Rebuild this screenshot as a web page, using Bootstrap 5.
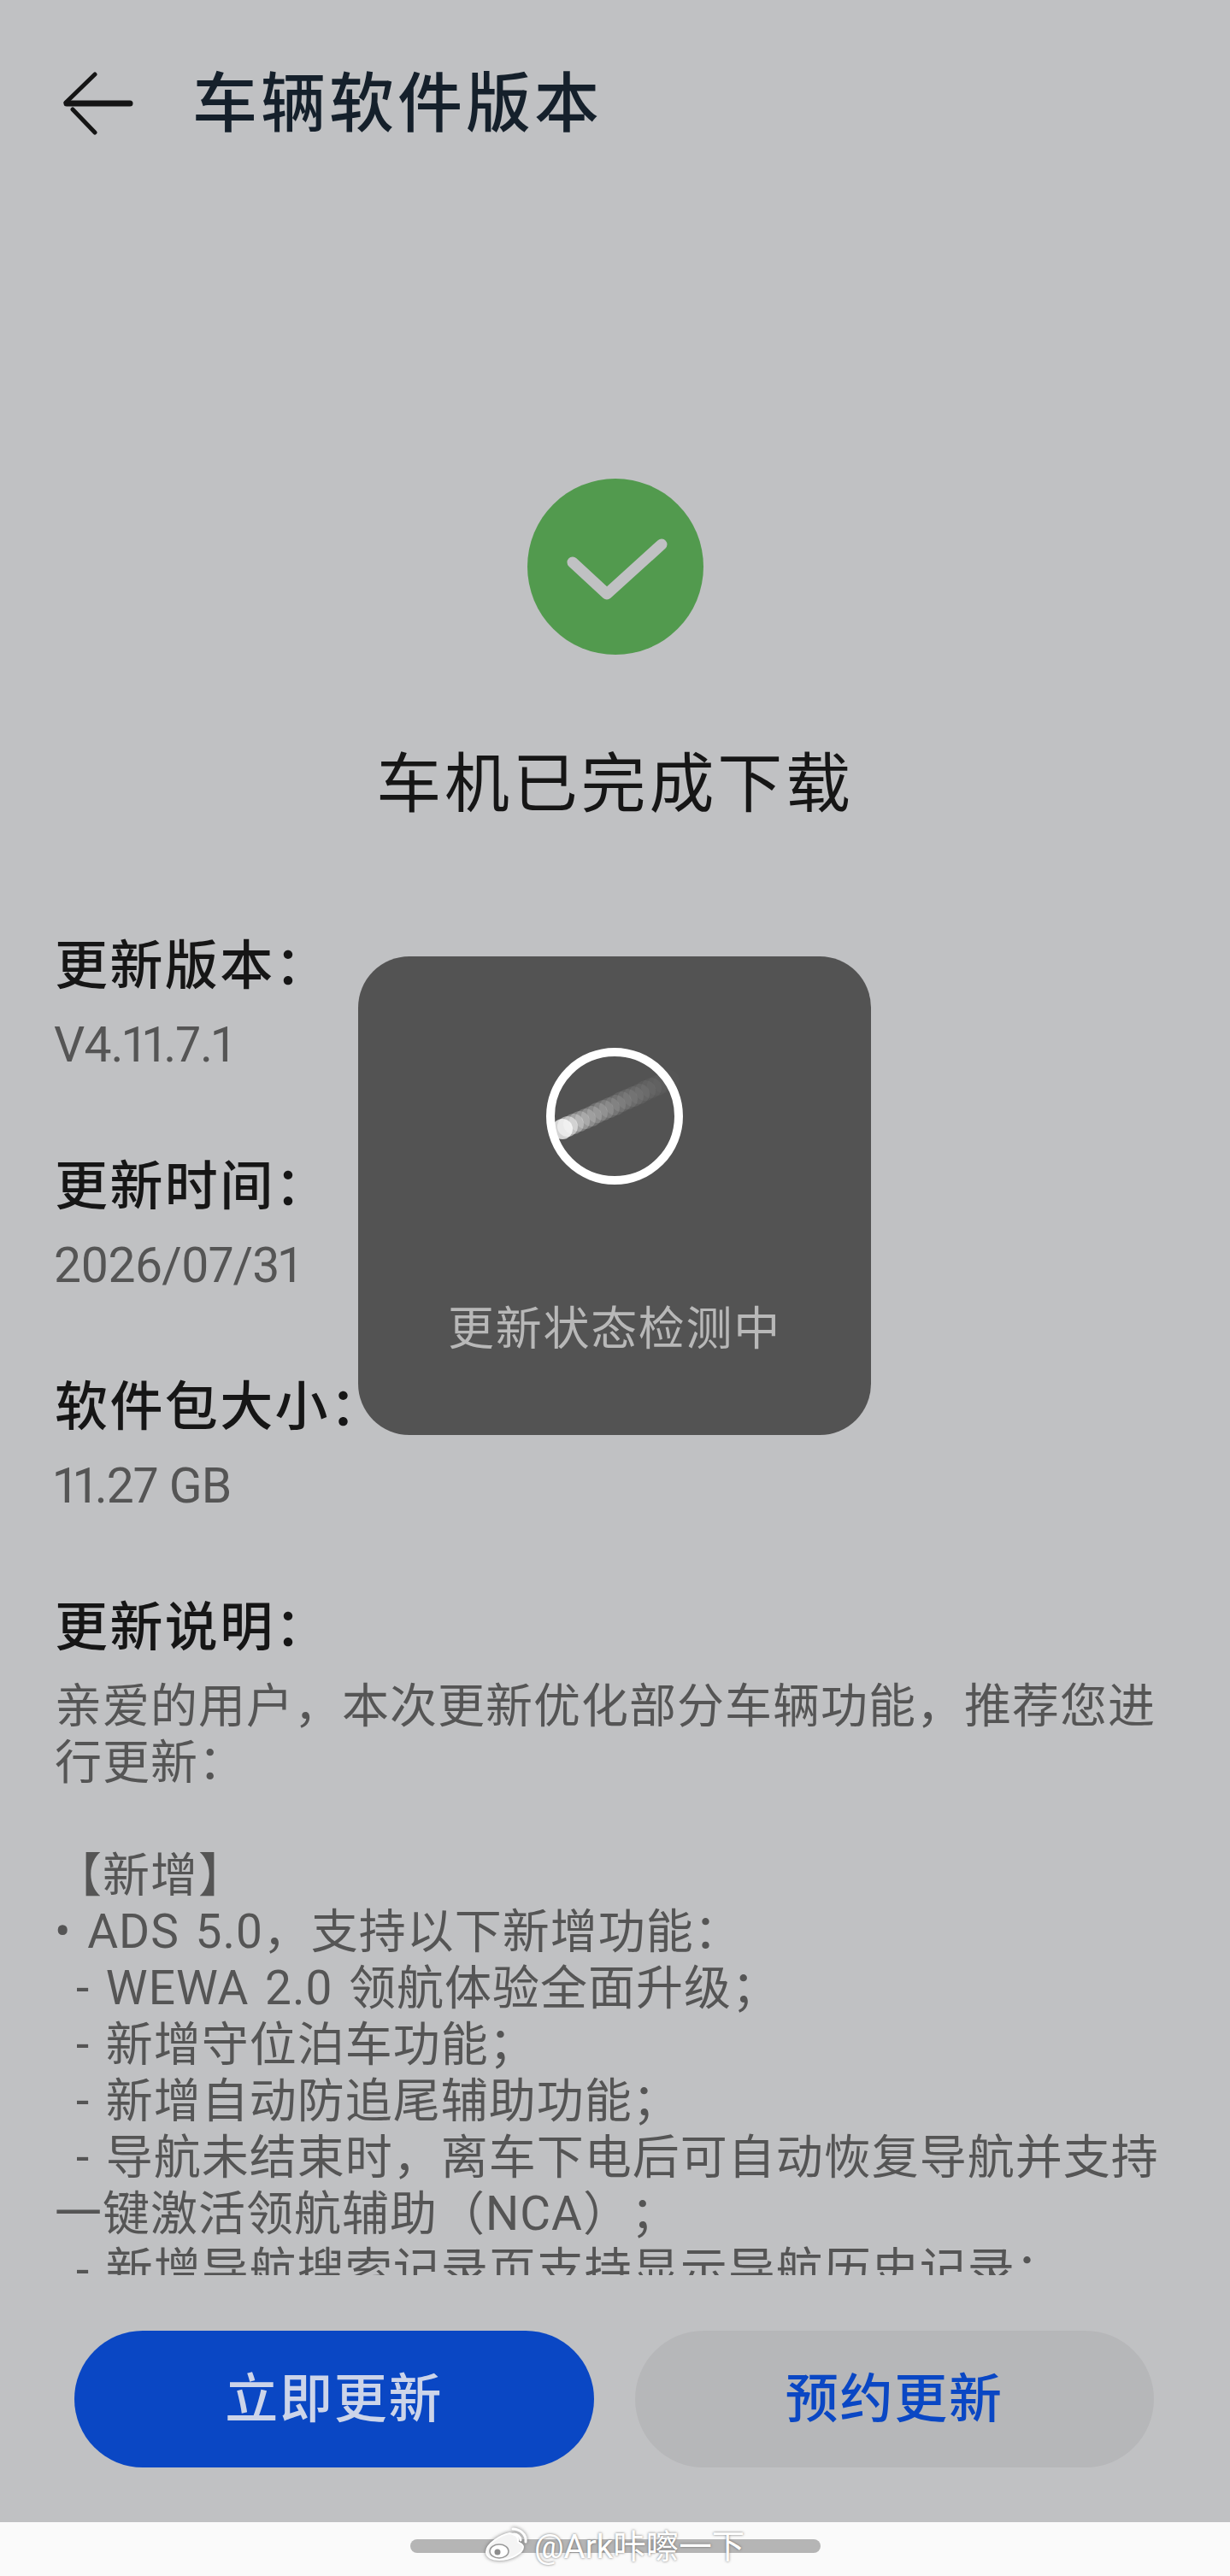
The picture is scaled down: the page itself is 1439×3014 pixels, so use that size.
<!DOCTYPE html>
<html lang="zh-CN">
<head>
  <meta charset="UTF-8" />
  <meta name="viewport" content="width=device-width, initial-scale=1.0"/>
  <title>车辆软件版本</title>
  <link href="https://cdn.jsdelivr.net/npm/bootstrap@5.3.0/dist/css/bootstrap.min.css" rel="stylesheet"/>
  <style>
    html, body { margin: 0; background: #fafafa; }
    body { font-family: Roboto, "Noto Sans CJK SC", sans-serif; text-spacing-trim: space-all; }
    .screen { width: 1439px; height: 3014px; overflow: hidden; position: relative; }
    .app-area { height: 2951px; background: #c0c1c3; }
    .top-bar { height: 238px; padding: 6px 0 0 72px; gap: 68px; }
    .top-bar h1 { margin: 0; font-size: 76px; font-weight: 500; letter-spacing: 4px; color: #15202b; line-height: 1; }
    .scroll-area { height: 2424px; overflow: hidden; padding: 0 64px; }
    .done-icon { margin-top: 322px; }
    .done-title { margin: 102px 0 0; font-size: 76px; font-weight: 400; letter-spacing: 3.8px; color: #161616; line-height: 100px; }
    .info-block { margin-top: 123px; }
    .info-label { margin: 0; font-size: 62px; font-weight: 500; letter-spacing: 2.4px; color: #161616; line-height: 80px; }
    .info-value { margin: 10px 0 84px -1px; font-size: 57px; letter-spacing: -.9px; color: #555; line-height: 84px; font-variant-numeric: proportional-nums; }
    .info-text { margin: 18px 0 0; font-size: 55px; letter-spacing: 1px; word-spacing: 4px; color: #555; line-height: 66px; }
    .info-text > div { min-height: 66px; }
    .info-text .sub-item { text-indent: 25px; }
    .action-row { height: 289px; padding: 65px 89px 0 87px; gap: 48px; }
    .action-row .btn { width: 608px; height: 160px; padding: 2px 0 0; border: 0; font-size: 62px; font-weight: 500; letter-spacing: 1.7px; line-height: 1; }
    .btn-now, .btn-now:hover { background: #0a47c4; color: #ccd4e9; }
    .btn-later, .btn-later:hover { background: #b6b7b9; color: #0a47c4; }
    .nav-strip { height: 63px; background: #fafafa; padding-top: 20px; }
    .home-bar { width: 480px; height: 16px; background: #b5b5b5; border-radius: 8px; }
    .check-dialog { position: absolute; left: 419px; top: 1119px; width: 600px; height: 560px; background: #535353; border-radius: 60px; }
    .check-dialog p { margin: 0; padding-top: 129px; font-size: 54px; letter-spacing: 1.7px; color: #b8b8b8; line-height: 72px; }
    .spin-ring { margin-top: 102px; }
    .watermark { position: absolute; left: 560px; top: 2950px; gap: 5px; color: #fff; font-size: 38.5px; line-height: 44px; text-shadow: 0 0 3px rgba(90,90,90,.9); }
    .watermark span { margin-top: 8px; }
    .watermark svg { filter: drop-shadow(0 0 2px rgba(90,90,90,.8)); }
  </style>
</head>
<body>
  <div class="screen">
    <div class="app-area">
      <header class="top-bar d-flex align-items-center">
        <svg width="85" height="76" viewBox="0 0 85 76" fill="none" stroke="#151515" stroke-linecap="round">
          <path d="M6 37H80" stroke-width="7"/>
          <path d="M39 3 5 36M13 44 39 71" stroke-width="5"/>
        </svg>
        <h1>车辆软件版本</h1>
      </header>

      <main class="scroll-area">
        <div class="text-center">
          <svg class="done-icon" width="206" height="206" viewBox="0 0 206 206">
            <circle cx="103" cy="103" r="103" fill="#529a4e"/>
            <path d="M53 98 93 135 157 77" fill="none" stroke="#c0c1c3" stroke-width="13" stroke-linecap="round" stroke-linejoin="round"/>
          </svg>
          <h2 class="done-title">车机已完成下载</h2>
        </div>

        <div class="info-block">
          <p class="info-label">更新版本：</p>
          <p class="info-value">V4.11.7.1</p>
          <p class="info-label">更新时间：</p>
          <p class="info-value">2026/07/31</p>
          <p class="info-label">软件包大小：</p>
          <p class="info-value">11.27 GB</p>
          <p class="info-label">更新说明：</p>
          <div class="info-text">
            <div>亲爱的用户，本次更新优化部分车辆功能，推荐您进行更新：</div>
            <div></div>
            <div>【新增】</div>
            <div>• ADS 5.0，支持以下新增功能：</div>
            <div class="sub-item">- WEWA 2.0 领航体验全面升级；</div>
            <div class="sub-item">- 新增守位泊车功能；</div>
            <div class="sub-item">- 新增自动防追尾辅助功能；</div>
            <div class="sub-item">- 导航未结束时，离车下电后可自动恢复导航并支持一键激活领航辅助（NCA）；</div>
            <div class="sub-item">- 新增导航搜索记录页支持显示导航历史记录；</div>
          </div>
        </div>
      </main>

      <div class="action-row d-flex">
        <button class="btn btn-now rounded-pill">立即更新</button>
        <button class="btn btn-later rounded-pill">预约更新</button>
      </div>
    </div>

    <div class="nav-strip d-flex justify-content-center">
      <div class="home-bar"></div>
    </div>

    <div class="check-dialog text-center">
      <svg class="spin-ring d-block mx-auto" width="200" height="170" viewBox="0 0 200 170">
        <g fill="#fff">
          <circle cx="39" cy="100" r="12" opacity=".75"/>
          <circle cx="45" cy="97" r="12" opacity=".5"/>
          <circle cx="52" cy="94" r="12" opacity=".3"/>
          <circle cx="59" cy="91" r="12" opacity=".25"/>
          <circle cx="66" cy="88" r="12" opacity=".2"/>
          <circle cx="73" cy="85" r="12" opacity=".18"/>
          <circle cx="80" cy="81" r="12" opacity=".16"/>
          <circle cx="87" cy="78" r="12" opacity=".14"/>
          <circle cx="94" cy="75" r="12" opacity=".12"/>
          <circle cx="101" cy="72" r="12" opacity=".1"/>
          <circle cx="108" cy="68" r="12" opacity=".09"/>
          <circle cx="115" cy="65" r="12" opacity=".08"/>
          <circle cx="122" cy="62" r="12" opacity=".07"/>
          <circle cx="129" cy="59" r="12" opacity=".06"/>
          <circle cx="136" cy="55" r="12" opacity=".05"/>
          <circle cx="143" cy="52" r="12" opacity=".04"/>
          <circle cx="150" cy="49" r="12" opacity=".03"/>
          <circle cx="157" cy="46" r="12" opacity=".02"/>
          <circle cx="164" cy="43" r="12" opacity=".015"/>
        </g>
        <circle cx="100" cy="85" r="75" fill="none" stroke="#fff" stroke-width="10"/>
      </svg>
      <p>更新状态检测中</p>
    </div>

    <div class="watermark d-flex align-items-start">
      <svg width="60" height="50" viewBox="0 0 60 50" fill="none" stroke-linecap="round">
        <path d="M36 14C26 16 9 26 9 36c0 6 7 9 15 9 14 0 28-8 28-15 0-4-6-5-6-6 1-5-2-9-10-10Z" fill="#f4f4f4" stroke="#fff" stroke-width="2"/>
        <ellipse cx="24" cy="35" rx="11" ry="8" fill="#fff" stroke="#9a9a9a" stroke-width="1.5"/>
        <circle cx="22" cy="36" r="3.5" fill="#8d8d8d"/>
        <path d="M40 9c8 0 16 6 15 15M41 15c4 0 8 3 8 7" stroke="#fff" stroke-width="3"/>
      </svg>
      <span>@Ark咔嚓一下</span>
    </div>
  </div>
  <script src="https://cdn.jsdelivr.net/npm/bootstrap@5.3.0/dist/js/bootstrap.bundle.min.js"></script>
</body>
</html>
